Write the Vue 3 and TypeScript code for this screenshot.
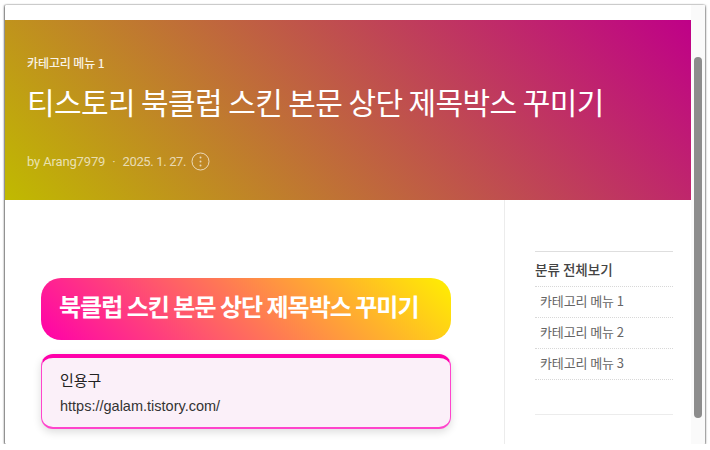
<script setup lang="ts">
const categories: string[] = ['카테고리 메뉴 1', '카테고리 메뉴 2', '카테고리 메뉴 3']
</script>

<template>
  <div class="frame">
    <div class="page">
      <header class="hero">
        <div class="cat">카테고리 메뉴 1</div>
        <h1 class="title">티스토리 북클럽 스킨 본문 상단 제목박스 꾸미기</h1>
        <div class="meta">
          <span>by Arang7979</span>
          <span class="dot">·</span>
          <span class="date">2025. 1. 27.</span>
          <span class="more" aria-hidden="true">
            <svg width="19" height="19" viewBox="0 0 19 19">
              <circle cx="9.5" cy="9.5" r="8.5" fill="none" stroke="currentColor" stroke-width="1" />
              <circle cx="9.5" cy="5.6" r="1" fill="currentColor" />
              <circle cx="9.5" cy="9.5" r="1" fill="currentColor" />
              <circle cx="9.5" cy="13.4" r="1" fill="currentColor" />
            </svg>
          </span>
        </div>
      </header>
      <div class="columns">
        <main class="article">
          <h2 class="heading">북클럽 스킨 본문 상단 제목박스 꾸미기</h2>
          <blockquote class="quote">
            <p class="q-title">인용구</p>
            <p class="q-link">https://galam.tistory.com/</p>
          </blockquote>
        </main>
        <aside class="side">
          <div class="side-title">분류 전체보기</div>
          <ul class="side-list">
            <li v-for="c in categories" :key="c">{{ c }}</li>
          </ul>
          <div class="side-end"></div>
        </aside>
      </div>
    </div>
    <div class="track"><div class="thumb"></div></div>
  </div>
</template>

<style scoped>
.frame {
  display: flex;
  width: 700px;
  height: 439px;
  margin: 5px 0 0 5px;
  background: #fff;
  overflow: hidden;
  border-radius: 1px;
  box-shadow: 0 0 1px rgba(0, 0, 0, 0.4), -1px 0 2px rgba(0, 0, 0, 0.4), 0 2px 2px rgba(0, 0, 0, 0.55), 1px 0 2px rgba(0, 0, 0, 0.25);
  font-family: "Noto Sans CJK KR", "Noto Sans", sans-serif;
}
.page {
  flex: 0 0 686px;
  padding-top: 15px;
}
.hero {
  height: 180px;
  padding: 31px 22px 0;
  box-sizing: border-box;
  background: linear-gradient(45deg, #c0ba00, #bf0088);
  color: #fff;
}
.cat {
  font-size: 12px;
  font-weight: 500;
  line-height: 24px;
  color: #f8f3e6;
  letter-spacing: -0.1px;
}
.title {
  margin: 2px 0 0;
  font-size: 30px;
  font-weight: 400;
  line-height: 48px;
  letter-spacing: -0.6px;
  white-space: nowrap;
}
.meta {
  display: flex;
  align-items: center;
  margin-top: 24px;
  height: 24px;
  font-family: Roboto, "Noto Sans", sans-serif;
  font-size: 13px;
  letter-spacing: -0.15px;
  color: rgba(255, 255, 255, 0.68);
}
.dot {
  margin: 0 7px;
}
.date {
  letter-spacing: -0.35px;
}
.more {
  display: flex;
  margin-left: 5px;
}
.columns {
  display: flex;
  height: 244px;
}
.article {
  flex: 0 0 500px;
  box-sizing: border-box;
  padding: 78px 0 0 36px;
  border-right: 1px solid #ececec;
}
.heading {
  width: 410px;
  height: 62px;
  box-sizing: border-box;
  margin: 0;
  padding-left: 18px;
  border-radius: 20px;
  background: linear-gradient(45deg, #ff00aa, #fff000);
  color: #fff;
  font-size: 24px;
  font-weight: 700;
  line-height: 56px;
  letter-spacing: -1px;
  white-space: nowrap;
}
.quote {
  width: 410px;
  height: 75px;
  box-sizing: border-box;
  margin: 14px 0 0;
  padding: 11px 18px 0;
  border: 1px solid #ff44cc;
  border-top: 4px solid #ff00aa;
  border-bottom-width: 2px;
  border-radius: 12px;
  background: #fbf0f9;
  box-shadow: 0 3px 8px rgba(0, 0, 0, 0.14);
  color: #222;
}
.q-title {
  margin: 0;
  font-size: 15px;
  line-height: 22px;
}
.q-link {
  margin: 4px 0 0;
  font-family: "Liberation Sans", Arial, sans-serif;
  font-size: 14.5px;
  line-height: 22px;
  color: #333;
}
.side {
  flex: 0 0 138px;
  margin: 51px 0 0 30px;
  border-top: 1px solid #dedede;
  height: fit-content;
}
.side-title {
  height: 35px;
  line-height: 34px;
  font-size: 13.5px;
  font-weight: 500;
  color: #444;
  border-bottom: 1px dotted #d8d8d8;
  box-sizing: border-box;
}
.side-list {
  list-style: none;
  margin: 0;
  padding: 0;
}
.side-list li {
  height: 31px;
  line-height: 28px;
  padding-left: 5px;
  font-size: 13px;
  letter-spacing: -0.1px;
  color: #666;
  border-bottom: 1px dotted #d8d8d8;
  box-sizing: border-box;
}
.side-end {
  margin-top: 34px;
  border-top: 1px solid #ececec;
}
.track {
  flex: 0 0 14px;
  box-sizing: border-box;
  padding: 52px 3px 0;
  background: #fafafa;
}
.thumb {
  width: 8px;
  height: 361px;
  border-radius: 4px;
  background: #8c8c8c;
}
</style>

<style>
html, body {
  background: #fff;
}
</style>
